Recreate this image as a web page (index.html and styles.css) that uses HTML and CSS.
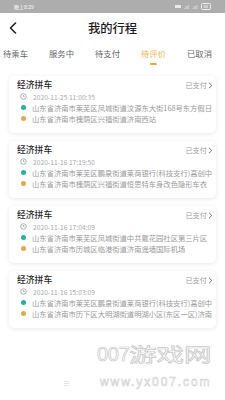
FILE: index.html
```html
<!DOCTYPE html>
<html lang="zh">
<head>
<meta charset="utf-8">
<link rel="stylesheet" href="styles.css">
</head>
<body>
<div class="page">
  <div class="status">
    <span class="st-time">晚上8:29</span>
    <span class="st-icons">
      <span class="st-box"></span>
      <span class="st-txt">.ııl</span>
      <span class="st-txt">.ııl</span>
      <span class="st-bat">88</span>
    </span>
  </div>
  <div class="header">
    <svg class="back" width="10" height="12" viewBox="0 0 10 12"><path d="M7.5 1 L2.5 6 L7.5 11" fill="none" stroke="#222" stroke-width="1.6" stroke-linecap="round" stroke-linejoin="round"/></svg>
    <div class="title">我的行程</div>
  </div>
  <div class="tabs">
    <div class="tab">待乘车</div>
    <div class="tab">服务中</div>
    <div class="tab">待支付</div>
    <div class="tab active">待评价</div>
    <div class="tab">已取消</div>
  </div>
  <div class="list">
    <div class="card">
      <div class="row top"><span class="ctitle">经济拼车</span><span class="paid">已支付<svg width="5" height="7" viewBox="0 0 5 7"><path d="M1 0.8 L3.8 3.5 L1 6.2" fill="none" stroke="#777" stroke-width="1"/></svg></span></div>
      <div class="row"><svg class="ico" width="7" height="7" viewBox="0 0 7 7"><circle cx="3.5" cy="3.5" r="2.8" fill="none" stroke="#999" stroke-width="0.8"/><path d="M3.5 2 V3.6 H4.8" fill="none" stroke="#999" stroke-width="0.7"/></svg><span class="time">2020-11-25 11:00:35</span></div>
      <div class="row"><span class="dot green"></span><span class="addr">山东省济南市莱芜区凤城街道汶源东大街168号东方假日</span></div>
      <div class="row"><span class="dot orange"></span><span class="addr">山东省济南市槐荫区兴福街道济南西站</span></div>
    </div>
    <div class="card">
      <div class="row top"><span class="ctitle">经济拼车</span><span class="paid">已支付<svg width="5" height="7" viewBox="0 0 5 7"><path d="M1 0.8 L3.8 3.5 L1 6.2" fill="none" stroke="#777" stroke-width="1"/></svg></span></div>
      <div class="row"><svg class="ico" width="7" height="7" viewBox="0 0 7 7"><circle cx="3.5" cy="3.5" r="2.8" fill="none" stroke="#999" stroke-width="0.8"/><path d="M3.5 2 V3.6 H4.8" fill="none" stroke="#999" stroke-width="0.7"/></svg><span class="time">2020-11-16 17:19:50</span></div>
      <div class="row"><span class="dot green"></span><span class="addr">山东省济南市莱芜区鹏泉街道莱商银行(科技支行)高创中</span></div>
      <div class="row"><span class="dot orange"></span><span class="addr">山东省济南市槐荫区兴福街道恒思特车身改色隐形车衣</span></div>
    </div>
    <div class="card">
      <div class="row top"><span class="ctitle">经济拼车</span><span class="paid">已支付<svg width="5" height="7" viewBox="0 0 5 7"><path d="M1 0.8 L3.8 3.5 L1 6.2" fill="none" stroke="#777" stroke-width="1"/></svg></span></div>
      <div class="row"><svg class="ico" width="7" height="7" viewBox="0 0 7 7"><circle cx="3.5" cy="3.5" r="2.8" fill="none" stroke="#999" stroke-width="0.8"/><path d="M3.5 2 V3.6 H4.8" fill="none" stroke="#999" stroke-width="0.7"/></svg><span class="time">2020-11-16 17:04:09</span></div>
      <div class="row"><span class="dot green"></span><span class="addr">山东省济南市莱芜区凤城街道中共戴花园社区第三片区</span></div>
      <div class="row"><span class="dot orange"></span><span class="addr">山东省济南市历城区临港街道济南遥墙国际机场</span></div>
    </div>
    <div class="card">
      <div class="row top"><span class="ctitle">经济拼车</span><span class="paid">已支付<svg width="5" height="7" viewBox="0 0 5 7"><path d="M1 0.8 L3.8 3.5 L1 6.2" fill="none" stroke="#777" stroke-width="1"/></svg></span></div>
      <div class="row"><svg class="ico" width="7" height="7" viewBox="0 0 7 7"><circle cx="3.5" cy="3.5" r="2.8" fill="none" stroke="#999" stroke-width="0.8"/><path d="M3.5 2 V3.6 H4.8" fill="none" stroke="#999" stroke-width="0.7"/></svg><span class="time">2020-11-16 15:03:09</span></div>
      <div class="row"><span class="dot green"></span><span class="addr">山东省济南市莱芜区鹏泉街道莱商银行(科技支行)高创中</span></div>
      <div class="row"><span class="dot orange"></span><span class="addr">山东省济南市历下区大明湖街道明湖小区(东区一区)济南</span></div>
    </div>
  </div>
  <div class="wm-small">≡</div>
  <div class="wm">
    <div class="wm-big"><span class="wm-num">007</span><span class="wm-cjk">游戏网</span></div>
    <div class="wm-url">www.yx007.com</div>
  </div>
</div>
</body>
</html>
```

FILE: styles.css
```css
html, body {
  margin: 0;
  padding: 0;
  background: #fff;
}
.page {
  position: relative;
  width: 225px;
  height: 400px;
  overflow: hidden;
  font-family: "Noto Sans CJK SC", "Noto Sans", sans-serif;
  background: #fff;
}
.status {
  height: 13px;
  background: #adadad;
  display: flex;
  align-items: center;
  justify-content: space-between;
  padding: 0 14px 0 14px;
  color: #fff;
  font-size: 5px;
  line-height: 13px;
}
.st-icons {
  display: flex;
  align-items: center;
  gap: 3px;
}
.st-box {
  width: 6px;
  height: 3px;
  background: #e8e8e8;
}
.st-txt {
  font-size: 5px;
  color: #eee;
}
.st-bat {
  font-size: 4px;
  border: 0.6px solid #eee;
  border-radius: 1.5px;
  padding: 0 2px;
  line-height: 5px;
}
.header {
  height: 30px;
  display: flex;
  align-items: center;
  justify-content: center;
  position: relative;
}
.back {
  position: absolute;
  left: 8px;
  top: 9px;
}
.title {
  font-size: 12.3px;
  font-weight: 500;
  color: #1a1a1a;
  line-height: 14px;
}
.tabs {
  height: 25px;
  display: flex;
  gap: 21px;
  padding-left: 3px;
  white-space: nowrap;
}
.tab {
  position: relative;
  width: 25px;
  font-size: 8.3px;
  line-height: 20px;
  height: 22px;
  color: #666;
  text-align: center;
}
.tab.active {
  color: #f7b24c;
}
.tab.active::after {
  content: "";
  position: absolute;
  left: 9px;
  top: 20px;
  width: 7px;
  height: 1.6px;
  border-radius: 1px;
  background: #f7a530;
}
.list {
  padding: 8px 9px 0 9px;
  display: flex;
  flex-direction: column;
  gap: 8px;
}
.card {
  height: 57px;
  box-sizing: border-box;
  padding: 3px 3px 0 8px;
  border-radius: 5px;
  background: #fff;
  box-shadow: 0 1px 5px rgba(0, 0, 0, 0.09);
  overflow: hidden;
}
.row {
  height: 11px;
  display: flex;
  align-items: center;
  white-space: nowrap;
  overflow: hidden;
}
.row.top {
  height: 12px;
  justify-content: space-between;
}
.ctitle {
  font-size: 8.8px;
  font-weight: 500;
  color: #2a2a2a;
  line-height: 12px;
}
.paid {
  font-size: 7.2px;
  color: #a0a0a0;
  display: flex;
  align-items: center;
  gap: 1px;
}
.ico {
  margin-left: 3px;
  margin-right: 6px;
  flex: none;
}
.time {
  font-size: 6.6px;
  color: #a8a8a8;
  letter-spacing: 0.05px;
}
.dot {
  flex: none;
  width: 5px;
  height: 5px;
  border-radius: 50%;
  margin-left: 4px;
  margin-right: 6px;
}
.dot.green {
  background: #1db59c;
}
.dot.orange {
  background: #f2a53c;
}
.addr {
  font-size: 7.3px;
  color: #999;
  overflow: hidden;
  text-overflow: clip;
  min-width: 0;
}
.wm {
  position: absolute;
  left: 97px;
  top: 341px;
  color: #fff;
}
.wm-big {
  font-size: 19px;
  line-height: 26px;
  height: 26px;
  -webkit-text-stroke: 0.7px #c9c9c9;
  color: #fff;
  white-space: nowrap;
  display: flex;
  align-items: center;
}
.wm-num {
  font-family: "Liberation Sans", sans-serif;
  font-size: 20px;
  letter-spacing: -0.3px;
}
.wm-cjk {
  display: inline-block;
  transform: scaleX(1.45);
  transform-origin: left center;
}
.wm-url {
  font-family: "Liberation Sans", sans-serif;
  font-size: 12px;
  letter-spacing: 1.9px;
  line-height: 14px;
  margin-top: 8px;
  margin-left: 3px;
  -webkit-text-stroke: 0.5px #c9c9c9;
  color: #fff;
  white-space: nowrap;
}
.wm-small {
  position: absolute;
  left: 63px;
  top: 378px;
  font-size: 7px;
  color: #d0d0d0;
}
```
